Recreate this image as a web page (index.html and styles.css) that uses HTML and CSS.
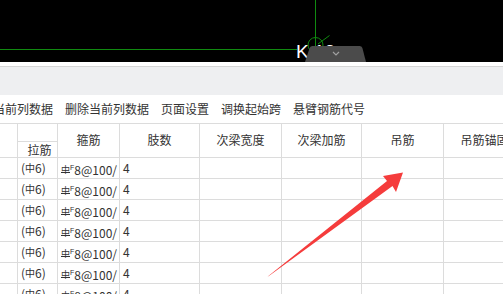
FILE: index.html
```html
<!DOCTYPE html>
<html lang="zh-CN">
<head>
<meta charset="utf-8">
<title>钢筋表</title>
<link rel="stylesheet" href="styles.css">
</head>
<body>
<div class="page">
  <div class="canvas">
    <svg class="cad" width="503" height="62" viewBox="0 0 503 62">
      <line x1="0" y1="49.5" x2="297" y2="49.5" stroke="#108a10" stroke-width="1"/>
      <line x1="315.5" y1="0" x2="315.5" y2="46" stroke="#108a10" stroke-width="1"/>
      <circle cx="315.5" cy="45" r="7.5" fill="none" stroke="#108a10" stroke-width="1"/>
      <line x1="318" y1="44" x2="329.5" y2="35.5" stroke="#108a10" stroke-width="1"/>
      <text x="296" y="57.5" class="cad-label">K 12</text>
      <path d="M305 62 L309.6 48 Q310.3 46 312.5 46 L359.5 46 Q361.7 46 362.4 48 L366 62 Z" fill="#4b4b4b"/>
      <polyline points="333,52 336,55 339,52" fill="none" stroke="#a0a0a0" stroke-width="1.2"/>
    </svg>
  </div>
  <div class="gap-strip"></div>
  <div class="band"></div>
  <div class="toolbar">
    <span class="tool first">当前列数据</span>
    <span class="tool">删除当前列数据</span>
    <span class="tool">页面设置</span>
    <span class="tool">调换起始跨</span>
    <span class="tool">悬臂钢筋代号</span>
  </div>
  <div class="grid">
    <div class="cell h-corner"></div>
    <div class="cell h-top"></div>
    <div class="cell h-span c2">箍筋</div>
    <div class="cell h-span c3">肢数</div>
    <div class="cell h-span c4">次梁宽度</div>
    <div class="cell h-span c5">次梁加筋</div>
    <div class="cell h-span c6">吊筋</div>
    <div class="cell h-span c7">吊筋锚固</div>
    <div class="cell h-sub">拉筋</div>

    <div class="cell"></div><div class="cell d">(<span class="phi">中</span>6)</div><div class="cell d"><span class="phi2">中</span><span class="sup">F</span>8@100/</div><div class="cell d">4</div><div class="cell"></div><div class="cell"></div><div class="cell"></div><div class="cell"></div>
    <div class="cell"></div><div class="cell d">(<span class="phi">中</span>6)</div><div class="cell d"><span class="phi2">中</span><span class="sup">F</span>8@100/</div><div class="cell d">4</div><div class="cell"></div><div class="cell"></div><div class="cell"></div><div class="cell"></div>
    <div class="cell"></div><div class="cell d">(<span class="phi">中</span>6)</div><div class="cell d"><span class="phi2">中</span><span class="sup">F</span>8@100/</div><div class="cell d">4</div><div class="cell"></div><div class="cell"></div><div class="cell"></div><div class="cell"></div>
    <div class="cell"></div><div class="cell d">(<span class="phi">中</span>6)</div><div class="cell d"><span class="phi2">中</span><span class="sup">F</span>8@100/</div><div class="cell d">4</div><div class="cell"></div><div class="cell"></div><div class="cell"></div><div class="cell"></div>
    <div class="cell"></div><div class="cell d">(<span class="phi">中</span>6)</div><div class="cell d"><span class="phi2">中</span><span class="sup">F</span>8@100/</div><div class="cell d">4</div><div class="cell"></div><div class="cell"></div><div class="cell"></div><div class="cell"></div>
    <div class="cell"></div><div class="cell d">(<span class="phi">中</span>6)</div><div class="cell d"><span class="phi2">中</span><span class="sup">F</span>8@100/</div><div class="cell d">4</div><div class="cell"></div><div class="cell"></div><div class="cell"></div><div class="cell"></div>
    <div class="cell"></div><div class="cell d">(<span class="phi">中</span>6)</div><div class="cell d"><span class="phi2">中</span><span class="sup">F</span>8@100/</div><div class="cell d">4</div><div class="cell"></div><div class="cell"></div><div class="cell"></div><div class="cell"></div>
  </div>
  <svg class="arrow" width="503" height="294" viewBox="0 0 503 294">
    <polygon points="267.5,277 392.5,186 396,192 403,172.5 383,176 387,181 269,275.5" fill="#f53c3c"/>
  </svg>
</div>
</body>
</html>
```
FILE: styles.css
```css
html, body {
  margin: 0;
  padding: 0;
  background: #ffffff;
}
body {
  width: 503px;
  height: 294px;
  overflow: hidden;
  font-family: "Noto Sans CJK SC", "Noto Sans", sans-serif;
  font-size: 12px;
  color: #333333;
}
.page {
  position: relative;
  width: 503px;
  height: 294px;
  overflow: hidden;
}
.canvas {
  height: 62px;
  background: #000000;
}
.cad {
  display: block;
}
.cad-label {
  font-family: "Liberation Sans", sans-serif;
  font-size: 19px;
  fill: #ffffff;
}
.gap-strip {
  height: 4px;
  background: #ffffff;
}
.band {
  height: 28px;
  background: #eeeff1;
  border-top: 1px solid #d6d6d6;
}
.toolbar {
  height: 28px;
  line-height: 28px;
  display: flex;
  gap: 12px;
  white-space: nowrap;
  background: #ffffff;
  color: #333333;
}
.tool.first {
  margin-left: -7px;
}
.grid {
  display: grid;
  grid-template-columns: 17px 39px 61px 79px 81px 79px 81px 81px;
  grid-template-rows: 17px 15px repeat(7, 20px);
  gap: 1px;
  background: #dcdcdc;
  border-top: 1px solid #dcdcdc;
  width: 532px;
}
.cell {
  background: #ffffff;
  overflow: hidden;
  white-space: nowrap;
}
.h-corner {
  grid-row: 1 / 3;
  grid-column: 1;
}
.h-top {
  grid-row: 1;
  grid-column: 2;
}
.h-span {
  grid-row: 1 / 3;
  display: flex;
  align-items: center;
  justify-content: center;
  padding-bottom: 3px;
}
.c2 { grid-column: 3; }
.c3 { grid-column: 4; }
.c4 { grid-column: 5; }
.c5 { grid-column: 6; }
.c6 { grid-column: 7; }
.c7 { grid-column: 8; }
.h-sub {
  grid-row: 2;
  grid-column: 2;
  line-height: 15px;
  text-align: center;
  padding-left: 4px;
}
.d {
  line-height: 20px;
  padding-left: 3px;
  font-size: 12px;
}
.phi {
  font-size: 10px;
  vertical-align: 1px;
}
.phi2 {
  font-size: 9px;
  vertical-align: 2px;
  text-decoration: underline;
  text-underline-offset: -1px;
}
.sup {
  font-size: 7px;
  vertical-align: 5px;
  font-family: "Liberation Sans", sans-serif;
}
.arrow {
  position: absolute;
  left: 0;
  top: 0;
  pointer-events: none;
}
```
